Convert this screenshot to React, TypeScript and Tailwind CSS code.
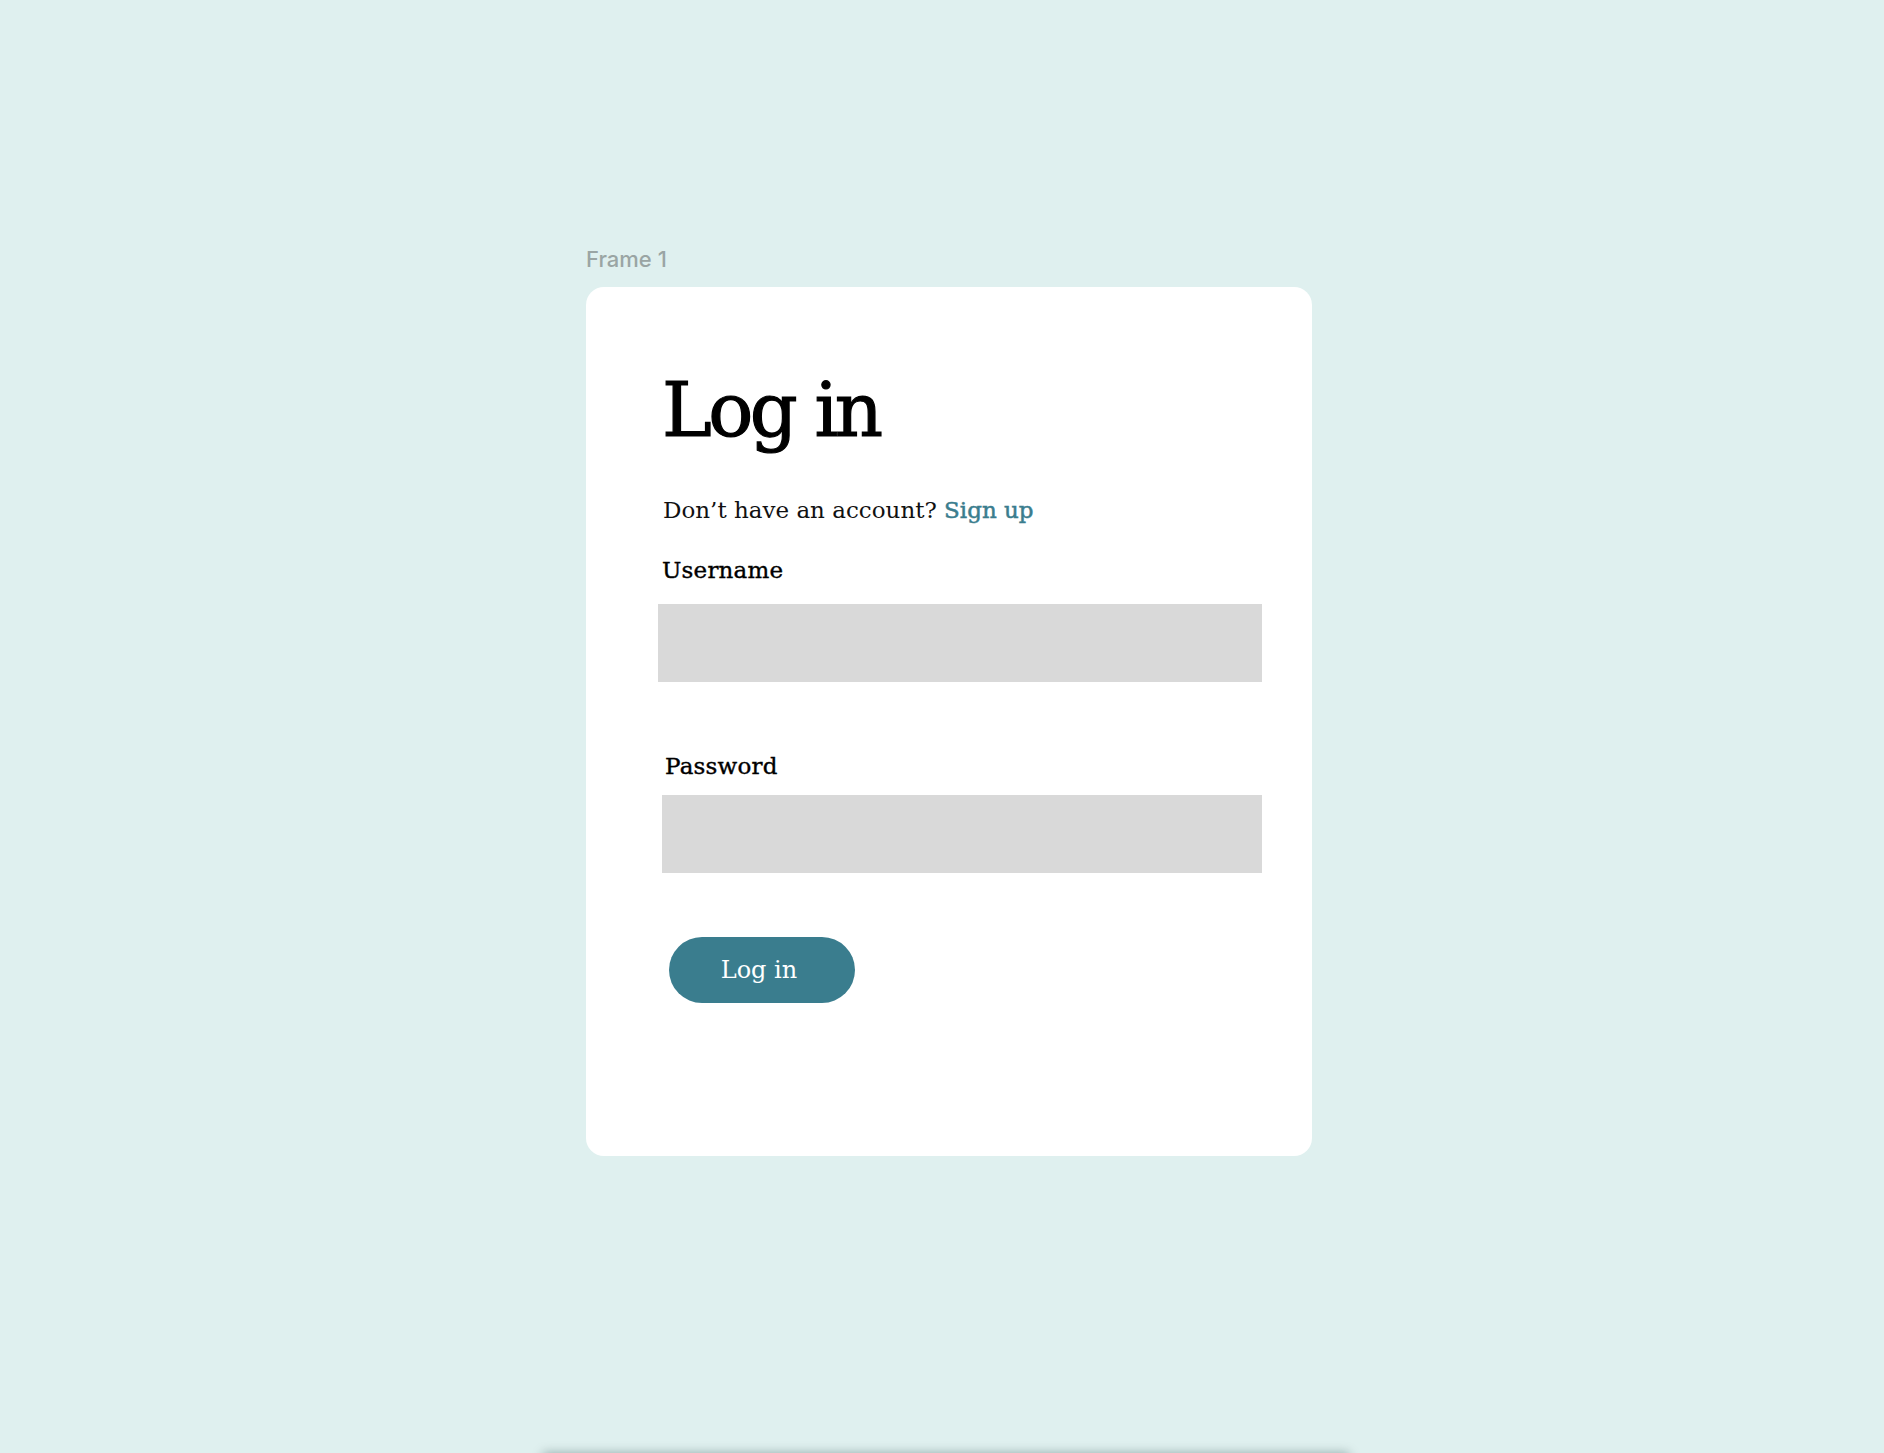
export default function App() {
  const serif = "font-['DejaVu_Serif','Liberation_Serif',serif]";

  return (
    <div className="h-[1453px] w-full overflow-hidden bg-[#dff0ef]">
      <div className="flex flex-col items-start pl-[586px] pt-[248px]">
        <div className="font-['Inter',sans-serif] text-[22px] font-medium leading-none text-[#9aa5a4]">Frame 1</div>

        <div className={`mt-[17px] flex h-[869px] w-[726px] flex-col items-start rounded-[18px] bg-white pt-[86px] ${serif}`}>
          <h1 className="ml-[76px] text-[75px] leading-none tracking-[-3.6px] text-black [-webkit-text-stroke:1.2px_black]">
            Log in
          </h1>

          <p className="ml-[77px] mt-[51px] text-[23px] leading-none text-[#111]">
            Don’t have an account?{" "}
            <a href="#" className="text-[#3a7d8e] [-webkit-text-stroke:0.5px_#3a7d8e]">
              Sign up
            </a>
          </p>

          <label className="ml-[76px] mt-[37px] text-[23px] leading-none tracking-[0.2px] text-black [-webkit-text-stroke:0.4px_black]">
            Username
          </label>
          <input
            type="text"
            className="ml-[72px] mt-[22px] h-[78px] w-[604px] bg-[#d9d9d9] outline-none"
          />

          <label className="ml-[79px] mt-[73px] text-[23px] leading-none tracking-[0.2px] text-black [-webkit-text-stroke:0.4px_black]">
            Password
          </label>
          <input
            type="password"
            className="ml-[76px] mt-[17px] h-[78px] w-[600px] bg-[#d9d9d9] outline-none"
          />

          <button className="ml-[83px] mt-[64px] flex h-[66px] w-[186px] items-center justify-center rounded-full bg-[#3a7d8e] pr-[6px] text-[24px] leading-none text-white">
            Log in
          </button>
        </div>

        {/* next frame, just below the fold */}
        <div className="-ml-[43px] mt-[297px] h-[200px] w-[806px] bg-white shadow-[0_0_10px_rgba(0,40,40,0.35)]" />
      </div>
    </div>
  );
}
